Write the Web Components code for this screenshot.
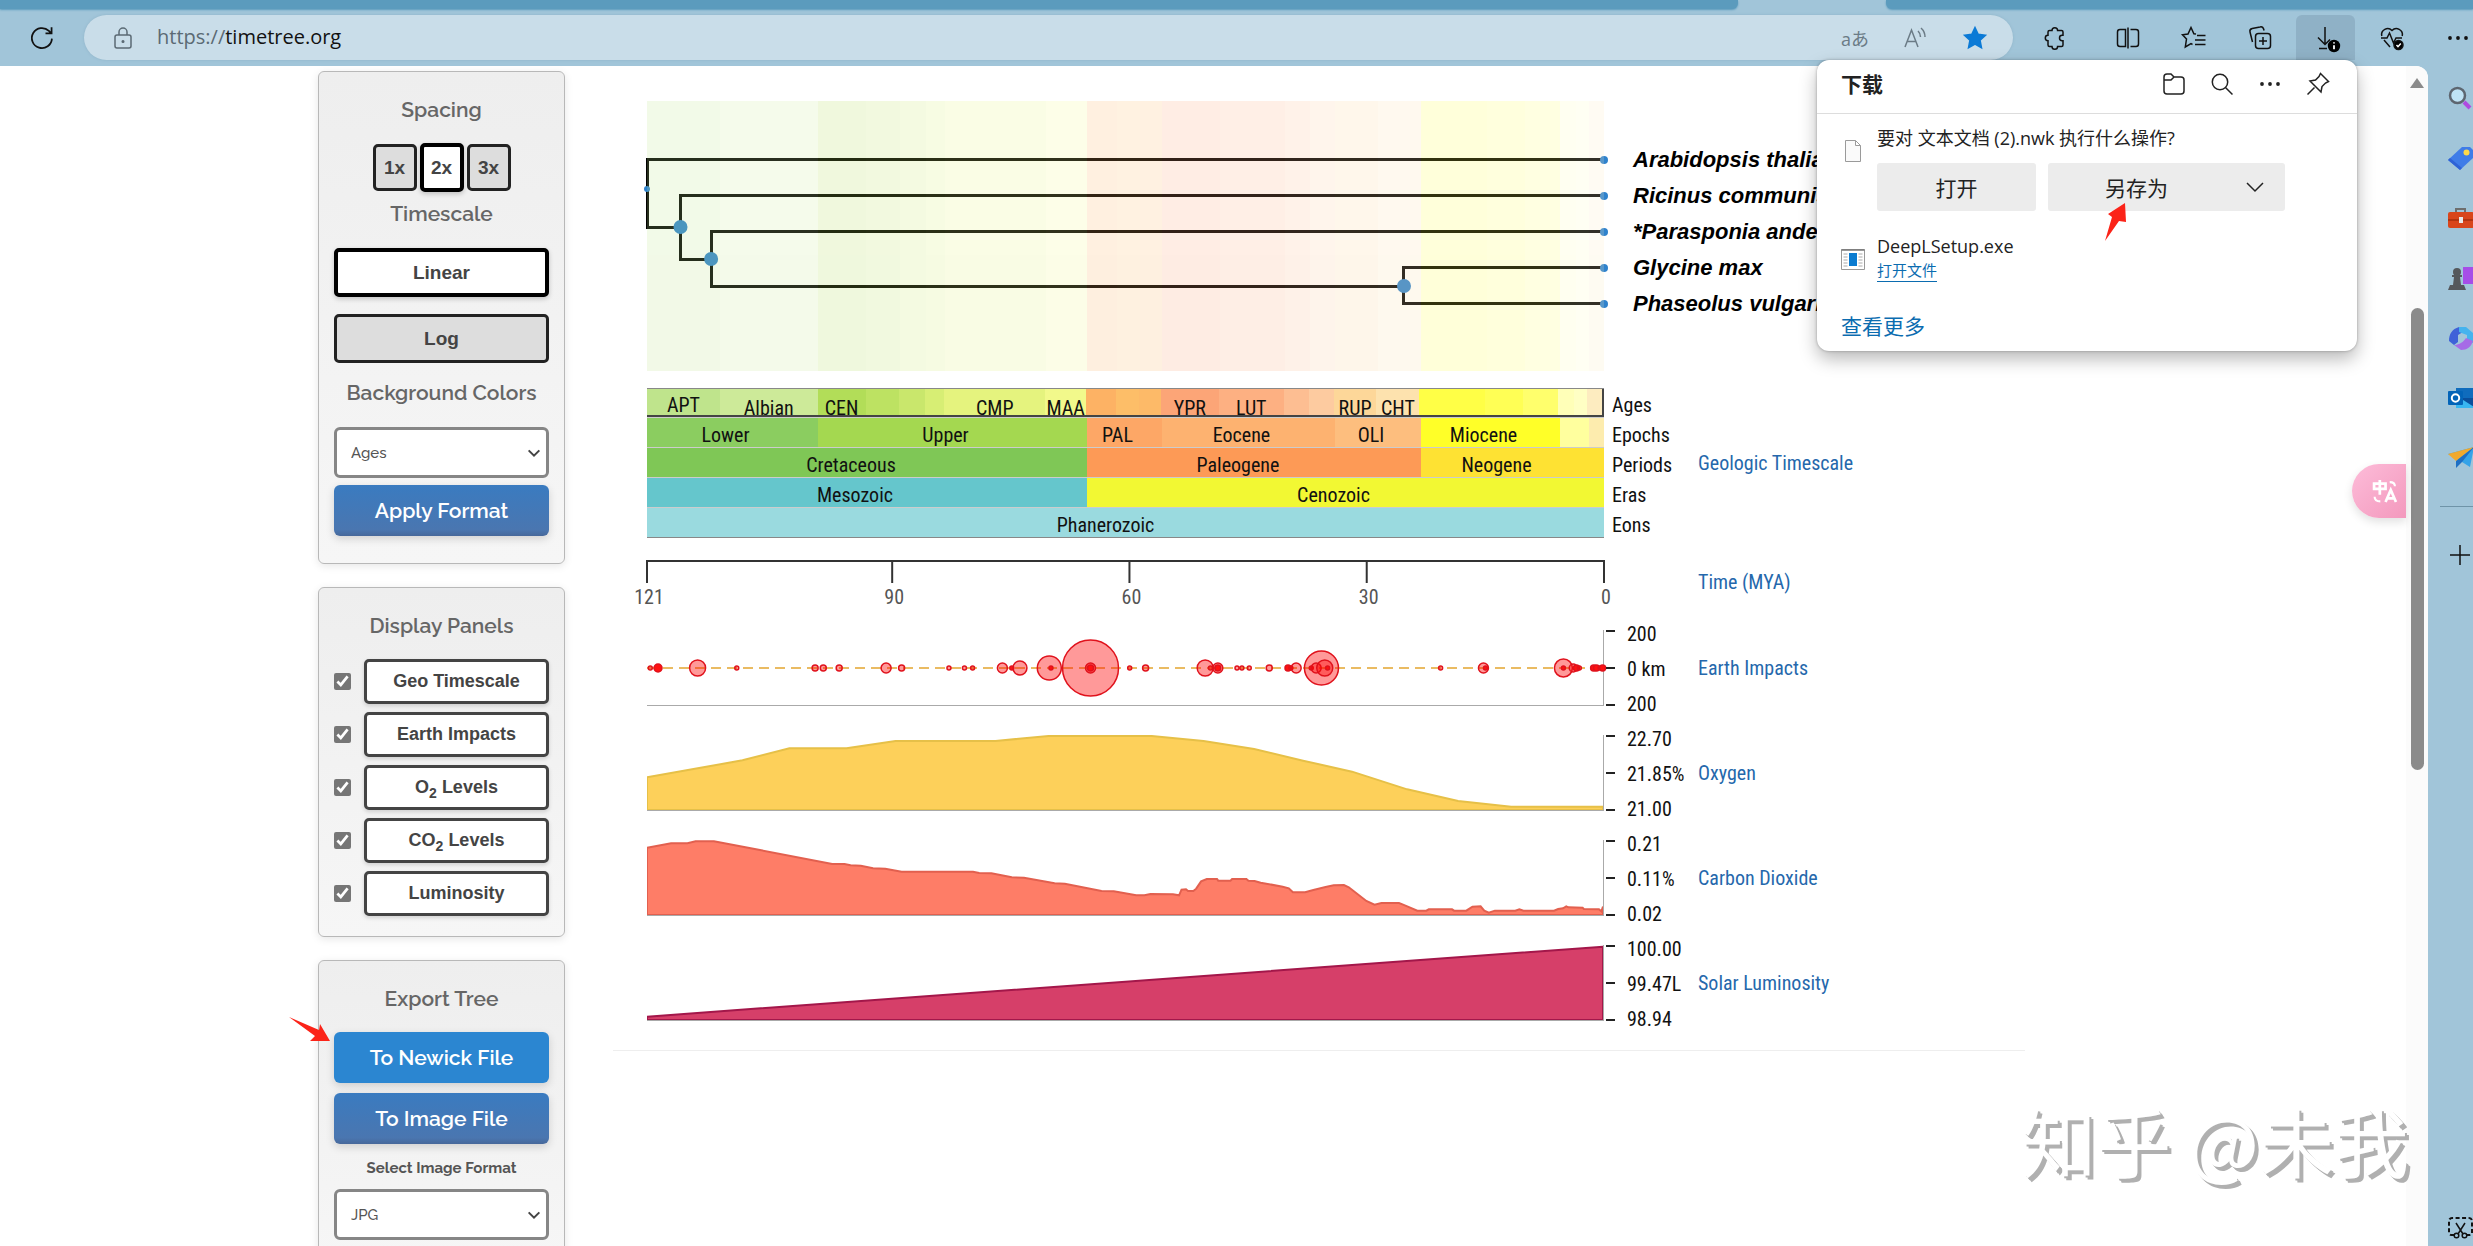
<!DOCTYPE html>
<html lang="zh-CN">
<head>
<meta charset="utf-8">
<title>TimeTree</title>
<style>
html,body{
	height: 100%;
}
body{
	margin: 0;
	overflow: hidden;
	font-family: "Open Sans","Noto Sans CJK SC",sans-serif;
}
</style>
</head>
<body>
<app-window></app-window>
<script>
const define=(name,html,setup)=>{
	customElements.define(name,class extends HTMLElement{
		constructor(){
			super();
			this.attachShadow({mode:'open'});
		}
		connectedCallback(){
			this.shadowRoot.innerHTML=typeof html=='function'?html(this):html;
			if(setup)setup(this);
		}
	});
};

const icons={
reload:'<path d="M20.5 12.5a8.6 8.6 0 1 1-2.6-6.6L20 8M20.2 2.8V8H15"/>',
lock:'<rect x="4" y="9" width="16" height="13" rx="2"/><path d="M8 9V6a4 4 0 0 1 8 0v3"/><circle cx="12" cy="15.500" r=".8" fill="currentColor"/>',
read:'<path d="M2 21 8.500 4 15 21M4.500 15.500h8M15 5a8 8 0 0 1 2.500 6M18 2a12 12 0 0 1 4 9"/>',
star:'<path fill="currentColor" d="m12 1.500 3.200 6.800 7.300.9-5.400 5.100 1.400 7.400L12 18.100l-6.500 3.600 1.400-7.400L1.500 9.200l7.300-.9z"/>',
puzzle:'<path d="M9 4.500a2.800 2.800 0 0 1 5.600 0h3.900c.8 0 1.500.7 1.500 1.500v3.300h-.8a2.700 2.700 0 0 0 0 5.400h.8V19c0 .8-.7 1.500-1.500 1.500h-3.900a2.800 2.800 0 0 1-5.600 0H6.500C5.700 20.500 5 19.800 5 19v-4.300a2.700 2.700 0 0 1 0-5.400V6c0-.8.700-1.500 1.500-1.500z"/>',
split:'<path d="M9.500 3.500H4A2.500 2.500 0 0 0 1.500 6v12A2.500 2.500 0 0 0 4 20.500h5.500zM14.500 3.500H20A2.500 2.500 0 0 1 22.500 6v12a2.500 2.500 0 0 1-2.500 2.500h-5.500M12 1.500v21"/>',
favs:'<path d="m14 8-2.100-.3L9 1.500 6 8l-5.500.8 4 4.200L3.300 21 9 17.700l1.500.8M15 9.500h8.500M13 14h10.500M13 18.500h10.500"/>',
collect:'<rect x="7.500" y="7.500" width="15" height="15" rx="3"/><path d="M15 11v8M11 15h8M4.500 16 2 6a3 3 0 0 1 2.200-3.600L12 .9a3 3 0 0 1 3.600 2.200l.5 1.500"/>',
download:'<path d="M11 1v17M4 11.500l7 7 5-5M5 22.500h8"/><circle cx="20" cy="20" r="6.200" fill="#000" stroke="none"/><path stroke="#fff" stroke-width="1.800" d="M20 19.300v4M20 16.200v1.300"/>',
heart:'<path d="M1.800 10A6 6 0 0 1 12 4.500 6 6 0 0 1 22.200 10M4 14l6 7M1 12h6l2.500-5 4 10 2.500-5h6"/><circle cx="18.500" cy="19" r="4.500" fill="#000"/><path stroke="#fff" d="m16.500 19 1.500 1.700 2.800-3.200"/>',
dots:'<g fill="currentColor" stroke="none"><circle cx="4" cy="12" r="1.900"/><circle cx="12" cy="12" r="1.900"/><circle cx="20" cy="12" r="1.900"/></g>',
folder:'<path d="M2 8V5a3 3 0 0 1 3-3h4l3 3h7a3 3 0 0 1 3 3v11a3 3 0 0 1-3 3H5a3 3 0 0 1-3-3zM2 8h7l3-3"/>',
search:'<circle cx="10" cy="10" r="7.700"/><path d="m15.700 15.700 6.800 6.800"/>',
pin:'<path d="m14.500 1.500 8 8-3 1.500-3.500 3.500-1 5.500-11-11 5.500-1L13 4.500zM8.500 15.500l-7 7"/>',
chev:'<path d="m4 8 8 8 8-8"/>',
page:'<path fill="#fafafa" stroke="#9a9a9a" stroke-width="1" d="M4.500 1.500h10l5 5v16h-15zM14.500 1.500v5h5"/>',
exe:'<path fill="#fff" stroke="#999" stroke-width="1" d="M.5 2.500h23v20H.5z"/><path stroke="#777" stroke-width="1.500" d="M.5 3h23"/><path stroke="#aaa" stroke-width="1" d="M2.500 7h4M2.500 10h4M2.500 13h4M2.500 16h4M2.500 19h4M17.500 7h4M17.500 10h4M17.500 13h4M17.500 16h4M17.500 19h4"/><path fill="#0a7bd0" stroke="none" d="M8 6h8v13H8z"/>',
lens:'<circle cx="9.500" cy="9.500" r="7.500" fill="#bfe3f5" stroke="#5d6670" stroke-width="2.500"/><path stroke="#b04be0" stroke-width="4" d="m16 16 6 6"/>',
tag:'<path fill="#3f7ce8" stroke="none" d="M14 1h8l3 3v8L12 24 0 14z"/><path fill="#2f63d6" stroke="none" d="m0 14 12 10 2-2L2 12z"/><circle cx="18.500" cy="6.500" r="3" fill="#ffd94a" stroke="none"/>',
case:'<path stroke="#6e6e6e" stroke-width="2" d="M8 7V3h9v4"/><rect x="0" y="6" width="26" height="16" rx="2" fill="#d8461b" stroke="none"/><path fill="#b23410" stroke="none" d="M0 13h26v2H0z"/><path fill="#e8e8e8" stroke="none" d="M11 11h4v6h-4z"/>',
chess:'<path fill="#a64de8" stroke="none" d="M15 1h11v17H15z"/><g fill="#55585c" stroke="none"><circle cx="9" cy="6" r="4"/><path d="M4 9h10v2h-2l1 8h3l2 5H0l2-5h3l1-8H4z"/></g>',
m365:'<path fill="#3f62d8" stroke="none" d="M11 1C4 3 1 8 1 15l5 4 4-3V9l8-5z"/><path fill="#45b3ee" stroke="none" d="m11 1 7 0 7 6v10l-6-3V9l-8-3z"/><path fill="#a66be6" stroke="none" d="M6 19c3 0 8-1 12-7l7 3c-2 6-6 9-12 9z"/>',
outlook:'<path fill="#0f6cbd" stroke="none" d="M8 2h18v20H8z"/><path fill="#38b6f1" stroke="none" d="M8 12h18v10H8z"/><path fill="#0a4f9c" stroke="none" d="m12 12 14 9V12z"/><rect y="5" width="15" height="14" rx="1" fill="#0364b8" stroke="none"/><circle cx="7.500" cy="12" r="3.700" stroke="#fff" stroke-width="2"/>',
plane:'<path fill="#35a3e8" stroke="none" d="m0 8 26-7-4 20-8-5z"/><path fill="#f0a92e" stroke="none" d="m0 8 26-7L8 15z"/><path fill="#1d6fc4" stroke="none" d="m8 22 0-7L26 1 14 16z"/>',
plus:'<path d="M12 2v20M2 12h20"/>',
snip:'<path stroke-width="2" stroke-dasharray="4 2.500" d="M6 20H3a2 2 0 0 1-2-2V6a3 3 0 0 1 3-3h17a3 3 0 0 1 3 3v12a2 2 0 0 1-2 2h-3"/><path d="m8 8 7 11M17 8l-7 11"/><circle cx="8.500" cy="20.500" r="2.300"/><circle cx="16.500" cy="20.500" r="2.300"/>',
swap:'<g stroke="#fff" stroke-width="2.600"><path d="M2 4.500h11v5H2zM7.500 1v14"/><path d="m13 22 5-11.500L23 22M14.500 18.500h7"/><path stroke-width="2" d="M17 3c3 0 5 1 5 4M2.500 17c0 3 2 4.500 5.500 4.500"/></g>',
};
define('ui-icon',el=>`
<style>
:host{
	display: inline-block;
	flex: none;
	width: var(--size,24px);
	height: var(--size,24px);
	line-height: 0;
}
svg{
	width: 100%;
	height: 100%;
	overflow: visible;
	fill: none;
	stroke: currentColor;
	stroke-width: var(--stroke,1.5);
}
</style>
<svg viewBox="0 0 24 24" aria-hidden="true">${icons[el.getAttribute('name')]}</svg>
`);

define('browser-bar',`
<style>
:host{
	display: block;
	flex: none;
	background: #a1c5d9;
	overflow: hidden;
}
.tabs{
	display: flex;
	height: 9px;
}
.tabs i{
	background: #5b9bbd;
	box-shadow: 0 1px 2px #5b9bbd;
}
.tabs i:first-child{
	flex: 1738;
	border-bottom-right-radius: 6px;
}
.tabs i:last-child{
	flex: 587;
	border-bottom-left-radius: 6px;
}
.tabs span{
	flex: 148;
}
.row{
	display: flex;
	align-items: center;
	height: 57px;
	padding-left: 19px;
}
button{
	flex: none;
	display: flex;
	align-items: center;
	justify-content: center;
	width: 59px;
	height: 45px;
	padding: 0;
	border: 0;
	border-radius: 6px;
	background: none;
	color: #111;
	font: 18px "Open Sans","Noto Sans CJK SC",sans-serif;
}
.reload{
	width: 46px;
	margin-right: 19px;
}
.field{
	flex: 1;
	display: flex;
	align-items: center;
	height: 45px;
	padding: 0 8px 0 27px;
	border-radius: 23px;
	background: #c9dde9;
	color: #5b6a74;
	box-shadow: 0 0 3px #8fb3c8;
}
.field button{
	width: 60px;
	color: #6b7b86;
}
.url{
	flex: 1;
	margin-left: 22px;
	font-size: 20px;
	line-height: 28px;
	padding-bottom: 2px;
}
.url b{
	font-weight: normal;
	color: #111;
}
.field button.fav{
	color: #0b7ad6;
}
.tools{
	flex: 0 0 448px;
	min-width: 0;
	display: flex;
	align-items: center;
	gap: 7px;
	margin-left: 12px;
}
.tools hr{
	width: 1px;
	height: 24px;
	margin: 0;
	border: 0;
	background: #7e9db0;
}
.on{
	background: #8fb1c6;
	border-radius: 6px 6px 0 0;
}
</style>
<div class="tabs"><i></i><span></span><i></i></div>
<div class="row">
	<button class="reload" aria-label="刷新"><ui-icon name="reload" style="--size:28px"></ui-icon></button>
	<div class="field">
		<ui-icon name="lock"></ui-icon>
		<span class="url">https://<b>timetree.org</b></span>
		<button>aあ</button>
		<button aria-label="朗读"><ui-icon name="read"></ui-icon></button>
		<button class="fav" aria-label="收藏"><ui-icon name="star"></ui-icon></button>
	</div>
	<div class="tools">
		<button aria-label="扩展"><ui-icon name="puzzle"></ui-icon></button>
		<hr>
		<button aria-label="分屏"><ui-icon name="split"></ui-icon></button>
		<button aria-label="收藏夹"><ui-icon name="favs"></ui-icon></button>
		<button aria-label="集锦"><ui-icon name="collect"></ui-icon></button>
		<button class="on" aria-label="下载"><ui-icon name="download"></ui-icon></button>
		<button aria-label="性能"><ui-icon name="heart"></ui-icon></button>
		<button aria-label="更多"><ui-icon name="dots"></ui-icon></button>
	</div>
</div>
`);

define('side-bar',`
<style>
:host{
	flex: none;
	box-sizing: border-box;
	width: 45px;
	display: flex;
	flex-direction: column;
	padding: 20px 0 7px 20px;
	overflow: hidden;
	background: #a1c5d9;
	--size: 24px;
}
button{
	display: block;
	width: 24px;
	height: 24px;
	margin: 0 0 36px;
	padding: 0;
	border: 0;
	background: none;
	color: #111;
}
hr{
	width: 100%;
	margin: 0 0 36px -8px;
	padding-right: 8px;
	border: 0;
	border-top: 1px solid #6f94a8;
}
.end{
	margin: auto 0 0;
}
</style>
<button aria-label="搜索"><ui-icon name="lens"></ui-icon></button>
<button aria-label="购物"><ui-icon name="tag"></ui-icon></button>
<button aria-label="工具"><ui-icon name="case"></ui-icon></button>
<button aria-label="游戏"><ui-icon name="chess"></ui-icon></button>
<button aria-label="Microsoft 365"><ui-icon name="m365"></ui-icon></button>
<button aria-label="Outlook"><ui-icon name="outlook"></ui-icon></button>
<button aria-label="Drop"><ui-icon name="plane"></ui-icon></button>
<hr>
<button aria-label="自定义"><ui-icon name="plus"></ui-icon></button>
<button class="end" aria-label="截图"><ui-icon name="snip"></ui-icon></button>
`);

define('download-popup',`
<style>
:host{
	display: block;
	width: 540px;
	border-radius: 12px;
	background: #fff;
	box-shadow: 0 8px 18px rgba(0,0,0,.28),0 0 3px rgba(0,0,0,.3);
	color: #222;
}
header{
	display: flex;
	align-items: center;
	gap: 24px;
	height: 54px;
	padding: 0 27px 5px 24px;
	box-sizing: border-box;
	border-bottom: 1px solid #ddd;
}
h2{
	flex: 1;
	margin: 0;
	font-size: 21px;
	line-height: 30px;
}
button{
	border: 0;
	border-radius: 3px;
	padding: 0;
	background: none;
	color: #222;
	font: 21px "Open Sans","Noto Sans CJK SC",sans-serif;
}
header button{
	width: 24px;
	height: 24px;
}
.item{
	display: grid;
	grid-template-columns: 24px 1fr;
	column-gap: 12px;
	padding: 0 72px 0 24px;
}
p{
	margin: 0;
	font-size: 18px;
	line-height: 26px;
}
.first{
	padding-top: 11px;
}
.item>ui-icon{
	margin-top: 14px;
}
.actions{
	display: grid;
	grid-template-columns: 159px 1fr;
	gap: 12px;
	margin: 12px 0 22px;
}
.actions button{
	height: 48px;
	background: #ececec;
}
.actions .save{
	display: grid;
	grid-template-columns: 177px 1fr;
	align-items: center;
	justify-items: center;
}
a{
	color: #0b6cb0;
	text-decoration: none;
}
.open{
	display: inline-block;
	border-bottom: 1px solid;
	font-size: 15px;
	line-height: 22px;
}
.more{
	display: block;
	padding: 29px 24px 10px;
	font-size: 21px;
	line-height: 30px;
}
</style>
<header>
	<h2>下载</h2>
	<button aria-label="打开文件夹"><ui-icon name="folder"></ui-icon></button>
	<button aria-label="搜索"><ui-icon name="search"></ui-icon></button>
	<button aria-label="更多"><ui-icon name="dots"></ui-icon></button>
	<button aria-label="固定"><ui-icon name="pin"></ui-icon></button>
</header>
<div class="item first">
	<ui-icon name="page"></ui-icon>
	<div>
		<p>要对 文本文档 (2).nwk 执行什么操作?</p>
		<div class="actions">
			<button>打开</button>
			<button class="save"><span>另存为</span><ui-icon name="chev"></ui-icon></button>
		</div>
	</div>
</div>
<div class="item">
	<ui-icon name="exe"></ui-icon>
	<div>
		<p>DeepLSetup.exe</p>
		<a class="open" href="#">打开文件</a>
	</div>
</div>
<a class="more" href="#">查看更多</a>
`);

define('tool-card',el=>`
<style>
:host{
	display: flex;
	flex-direction: column;
	padding: 23px 15px 20px;
	border: 1px solid #b8b8b8;
	border-radius: 6px;
	background: linear-gradient(#eee,#f6f6f6);
	box-shadow: 0 2px 8px rgba(0,0,0,.1);
}
h3{
	margin: 0 0 18px;
	font: 600 21px/30px Raleway,Lato,sans-serif;
	color: #666;
	text-align: center;
}
</style>
<h3>${el.getAttribute('heading')}</h3>
<slot></slot>
`);

define('tool-select',el=>`
<style>
:host{
	display: grid;
}
select,ui-icon{
	grid-area: 1/1;
}
select{
	appearance: none;
	height: 51px;
	padding: 0 14px;
	border: 3px solid #868686;
	border-radius: 6px;
	background: #fff;
	color: #555;
	font: 500 15px Raleway,Lato,sans-serif;
}
ui-icon{
	--size: 16px;
	--stroke: 3;
	place-self: center end;
	margin-right: 7px;
	color: #444;
	pointer-events: none;
}
</style>
<select aria-label="${el.getAttribute('label')}"><option>${el.getAttribute('value')}</option></select>
<ui-icon name="chev"></ui-icon>
`);

define('panel-toggle',el=>`
<style>
:host{
	display: flex;
	align-items: center;
	gap: 13px;
}
input{
	flex: none;
	width: 17px;
	height: 17px;
	margin: 0;
	accent-color: #767676;
}
label{
	flex: 1;
	box-sizing: border-box;
	height: 45px;
	border: 3px solid #444;
	border-radius: 5px;
	background: #fff;
	box-shadow: 0 2px 4px rgba(0,0,0,.15);
	color: #444;
	font: bold 18px/38px "Liberation Sans",sans-serif;
	text-align: center;
}
</style>
<input type="checkbox" id="box" checked><label for="box"><slot></slot></label>
`);

define('tool-column',`
<style>
:host{
	display: flex;
	flex-direction: column;
	gap: 23px;
	padding-top: 5px;
}
button{
	box-sizing: border-box;
	height: 49px;
	padding: 0;
	border: 3px solid #222;
	border-radius: 5px;
	background: #ddd;
	color: #444;
	font: bold 19px "Liberation Sans",sans-serif;
}
button.on{
	border: 4px solid #000;
	background: #fff;
	box-shadow: 0 2px 5px rgba(0,0,0,.2);
}
.spacing{
	display: flex;
	justify-content: center;
	align-items: center;
	gap: 3px;
}
.spacing button{
	width: 44px;
	height: 47px;
}
.spacing .on{
	height: 49px;
}
h3{
	margin: 7px 0 19px;
	font: 600 21px/30px Raleway,Lato,sans-serif;
	color: #666;
	text-align: center;
}
.log{
	margin-top: 17px;
}
h3.bg{
	margin-top: 15px;
}
button.blue{
	height: 51px;
	border: 0;
	border-radius: 6px;
	background: linear-gradient(#3a7bc0,#4a76b0 88%,#47689a);
	box-shadow: 0 3px 8px rgba(0,0,0,.15);
	color: #fff;
	font: 600 21px Raleway,Lato,sans-serif;
}
button.hot{
	margin-bottom: 10px;
	background: #2b86d1;
}
.apply{
	margin: 7px 0;
}
.toggles{
	display: flex;
	flex-direction: column;
	gap: 8px;
}
h4{
	margin: 12px 0 9px;
	font: bold 15px/24px Raleway,Lato,sans-serif;
	color: #555;
	text-align: center;
}
sub{
	font-size: 14px;
	line-height: 0;
}
</style>
<tool-card heading="Spacing">
	<div class="spacing"><button>1x</button><button class="on">2x</button><button>3x</button></div>
	<h3>Timescale</h3>
	<button class="on">Linear</button>
	<button class="log">Log</button>
	<h3 class="bg">Background Colors</h3>
	<tool-select label="Background Colors" value="Ages"></tool-select>
	<button class="blue apply">Apply Format</button>
</tool-card>
<tool-card heading="Display Panels">
	<div class="toggles">
		<panel-toggle>Geo Timescale</panel-toggle>
		<panel-toggle>Earth Impacts</panel-toggle>
		<panel-toggle>O<sub>2</sub> Levels</panel-toggle>
		<panel-toggle>CO<sub>2</sub> Levels</panel-toggle>
		<panel-toggle>Luminosity</panel-toggle>
	</div>
</tool-card>
<tool-card heading="Export Tree">
	<button class="blue hot">To Newick File</button>
	<button class="blue">To Image File</button>
	<h4>Select Image Format</h4>
	<tool-select label="Select Image Format" value="JPG"></tool-select>
</tool-card>
`);

// [share of the width, colour, name]
const ages=[
	[73,'#bfe48c','APT'],[98,'#cdea99','Albian'],[48,'#b2dd58','CEN'],[34,'#bde262'],[26,'#c9e76c'],[19,'#d7ee74'],
	[101,'#e5f37e','CMP'],[41,'#f2f98b','MAA'],[30,'#fdb264'],[23,'#fdbe68'],[22,'#fdba68'],[58,'#fca577','YPR'],
	[65,'#fdb082','LUT'],[25,'#fdbe92'],[25,'#fdcba0'],[43,'#fdd799','RUP'],[43,'#fde2ae','CHT'],[66,'#ffff46'],
	[38,'#ffff55'],[35,'#ffff6c'],[16,'#ffffb8'],[13,'#ffffc4'],[15,'#fdecc0'],
];
const strata=[
	ages,
	[[171,'#8bcd60','Lower'],[269,'#a4d850','Upper'],[75,'#fda766','PAL'],[173,'#fdb270','Eocene'],[86,'#fdbe7e','OLI'],[139,'#ffff28','Miocene'],[29,'#ffff9e'],[15,'#fdecae']],
	[[440,'#7fc756','Cretaceous'],[334,'#fd9a56','Paleogene'],[183,'#fee233','Neogene']],
	[[440,'#65c6cc','Mesozoic'],[517,'#f2f833','Cenozoic']],
	[[957,'#9adadf','Phanerozoic']],
];
const bands=row=>row.map(([w,c,t])=>`<span style="flex-grow:${w};background:${c}">${t||''}</span>`).join('');

define('geo-bands',`
<style>
:host{
	display: block;
	border-top: 1px solid #888;
	border-bottom: 1px solid #888;
	color: #111;
}
div{
	display: flex;
	height: 30px;
	box-sizing: border-box;
	border-top: 1px solid rgba(0,0,0,.2);
	line-height: 34px;
}
span{
	flex: 0 0 0;
	min-width: 0;
	text-align: center;
	white-space: nowrap;
}
div:nth-of-type(1){
	height: 28px;
	border-top: 0;
	border-bottom: 2px solid #444;
	border-right: 2px solid #444;
	line-height: 38px;
}
div:nth-of-type(1) span:first-child{
	line-height: 32px;
}
/* names sit left of their band's middle, more so in the wider ranks */
div:nth-of-type(2){
	text-indent: -14px;
}
div:nth-of-type(3){
	text-indent: -32px;
}
div:nth-of-type(4){
	text-indent: -24px;
}
div:nth-of-type(5){
	text-indent: -40px;
}
</style>
${strata.map(r=>`<div>${bands(r)}</div>`).join('')}
`);

define('tree-plot',`
<style>
:host{
	display: grid;
	height: 270px;
}
.back,svg{
	grid-area: 1/1;
}
.back{
	display: flex;
	opacity: .2;
}
.back span{
	flex: 0 0 0;
}
svg{
	width: 100%;
	height: 100%;
	overflow: visible;
	stroke: #000;
	stroke-width: 3;
	stroke-linecap: square;
}
line{
	shape-rendering: crispEdges;
}
circle{
	fill: #2f82cc;
	stroke: none;
}
</style>
<div class="back">${ages.map(([w,c])=>`<span style="flex-grow:${w};background:${c}"></span>`).join('')}</div>
<svg aria-hidden="true"></svg>
`,el=>{
	const h=[[0,100,58],[3.5,100,94],[6.7,100,130],[79.1,100,166],[79.1,100,202],[0,3.5,126],[3.5,6.7,158],[6.7,79.1,185]];
	const v=[[0,58,126],[3.5,94,158],[6.7,130,185],[79.1,166,202]];
	const c=[[0,88,3],[3.5,126,7],[6.7,158,7],[79.1,185,7],[100,59,4],[100,95,4],[100,131,4],[100,167,4],[100,203,4]];
	el.shadowRoot.querySelector('svg').innerHTML=
		h.map(([a,b,y])=>`<line x1="${a}%" x2="${b}%" y1="${y+.5}" y2="${y+.5}"/>`).join('')+
		v.map(([x,a,b])=>`<line x1="${x}%" x2="${x}%" y1="${a+.5}" y2="${b+.5}"/>`).join('')+
		c.map(([x,y,r])=>`<circle cx="${x}%" cy="${y}" r="${r}"/>`).join('');
});

define('time-axis',`
<style>
:host{
	display: block;
	height: 70px;
}
svg{
	width: 100%;
	height: 70px;
	overflow: visible;
	stroke: #333;
	stroke-width: 2;
}
text{
	fill: #555;
	stroke: none;
	text-anchor: middle;
}
</style>
<svg></svg>
`,el=>{
	el.shadowRoot.querySelector('svg').innerHTML='<line x1="0" x2="100%" y1="1" y2="1"/>'+
		[121,90,60,30,0].map(t=>{
			const x=(100-t/1.21)+'%';
			return `<line x1="${x}" x2="${x}" y1="0" y2="23"/><text x="${x}" dx="2" y="44">${t}</text>`;
		}).join('');
});

// [position on the 0-2343 scale, radius, solid]
const impacts=[
	[8,2],[27,4,1],[124,8],[220,2],[412,3],[432,3],[471,3],[586,5],[624,3],[740,2],[778,2],[798,2],[871,5],[894,2,1],
	[914,7],[986,12],[990,2,1],[1087,28],[1087,5],[1087,3,1],[1183,2],[1222,3],[1368,8],[1381,2],[1399,5],[1399,3,1],
	[1446,2],[1458,2],[1476,2],[1525,3],[1571,3,1],[1578,2],[1591,5],[1653,17],[1628,2,1],[1640,5],[1661,8],[1668,2,1],
	[1945,2],[2050,5],[2055,2,1],[2246,9],[2246,2,1],[2270,4],[2278,3,1],[2285,2],[2320,3,1],[2327,3,1],[2336,2,1],[2342,3,1],
];
define('impact-plot',`
<style>
:host{
	display: block;
	height: 75px;
	border-right: 1px solid #aaa;
	border-bottom: 1px solid #aaa;
}
svg{
	display: block;
	width: 100%;
	height: 75px;
	overflow: visible;
}
circle{
	fill: rgba(255,0,0,.4);
	stroke: #e0121c;
	stroke-width: 1.5;
}
.solid{
	fill: #f11;
}
</style>
<svg aria-hidden="true">
<line x1="0" x2="100%" y1="38" y2="38" stroke="#eabb62" stroke-width="2" stroke-dasharray="10 6"/>
${impacts.map(([x,r,s])=>`<circle cx="${x/23.43}%" cy="38" r="${r}"${s?' class="solid"':''}/>`).join('')}
</svg>
`);

const curves={
oxygen:['#fdd05a','#e6c048','0 127 114 102 234 76 349 40 489 40 609 18 854 18 984 3 1237 3 1364 18 1488 42 1608 77 1728 110 1863 163 1988 198 2118 215 2343 215'],
carbon:['#fe7d67','#e2604f','0 23 59 10 99 10 119 4 164 4 264 27 454 72 484 72 499 76 524 77 554 85 584 86 624 95 799 95 814 99 844 100 894 112 924 113 999 130 1024 131 1114 153 1144 154 1199 166 1219 166 1234 162 1289 163 1304 166 1310 149 1321 148 1326 153 1339 153 1346 146 1358 124 1372 117 1397 117 1400 122 1430 122 1434 117 1469 117 1474 122 1489 123 1504 128 1558 140 1573 145 1583 157 1613 157 1633 150 1663 141 1683 136 1708 135 1720 142 1763 183 1783 194 1800 189 1843 189 1853 194 1888 212 1910 212 1916 208 1973 208 1978 212 2008 212 2023 200 2043 199 2052 212 2063 218 2078 212 2128 212 2138 208 2148 212 2223 212 2233 207 2245 205 2253 199 2258 202 2293 203 2296 207 2333 208 2339 214 2343 200'],
solar:['#d63f69','#a3174a','0 215 2343 5'],
};
define('area-plot',el=>{
	const [fill,stroke,pts]=curves[el.getAttribute('curve')];
	return `
<style>
:host{
	display: block;
	height: 75px;
	border-right: 1px solid #aaa;
	border-bottom: 1px solid #aaa;
}
svg{
	display: block;
	width: 100%;
	height: 75px;
}
polygon{
	stroke-width: 2;
	vector-effect: non-scaling-stroke;
}
</style>
<svg viewBox="0 0 2343 225" preserveAspectRatio="none" aria-hidden="true">
<polygon fill="${fill}" stroke="${stroke}" points="${pts} 2343 225 0 225"/>
</svg>`;
});

define('axis-marks',el=>`
<style>
:host{
	display: flex;
	gap: 12px;
	padding-left: 2px;
	color: #111;
}
.ticks{
	width: 9px;
	height: 76px;
}
.ticks,.nums{
	display: flex;
	flex-direction: column;
	justify-content: space-between;
}
i{
	height: 2px;
	background: #222;
}
.nums{
	margin: -6px 0 -8px;
	line-height: 20px;
}
</style>
<div class="ticks"><i></i><i></i><i></i></div>
<div class="nums">${el.getAttribute('values').split(' | ').map(t=>`<span>${t}</span>`).join('')}</div>
`);

define('track-row',`
<style>
:host{
	display: grid;
	grid-template-columns: minmax(0,1fr) 94px 327px;
}
.name{
	align-self: center;
}
</style>
<slot></slot>
<slot name="marks"><span></span></slot>
<div class="name"><slot name="name"></slot></div>
`);

define('chart-panel',`
<style>
:host{
	display: flex;
	flex-direction: column;
	padding: 35px 0 29px 34px;
	border-bottom: 1px solid #eee;
	font: 20px/24px "Roboto Condensed",Roboto,sans-serif;
}
.tree{
	display: grid;
	grid-template-columns: minmax(0,1fr) 421px;
}
ul{
	margin: 0;
	padding: 41px 0 0 29px;
	list-style: none;
	font: italic bold 22px/36px "Liberation Sans",sans-serif;
	color: #000;
}
a{
	color: #2568ac;
	text-decoration: none;
}
.strata{
	margin: 17px 0 22px;
}
.ranks{
	display: flex;
	flex-direction: column;
	padding: 2px 0 0 8px;
	margin-bottom: -2px;
	color: #111;
	line-height: 30px;
}
.tracks{
	display: flex;
	flex-direction: column;
	gap: 29px;
}
.time a{
	display: block;
	padding-bottom: 26px;
}
</style>
<div class="tree">
	<tree-plot></tree-plot>
	<ul>
		<li>Arabidopsis thaliana</li>
		<li>Ricinus communis</li>
		<li>*Parasponia andersonii</li>
		<li>Glycine max</li>
		<li>Phaseolus vulgaris</li>
	</ul>
</div>
<track-row class="strata">
	<geo-bands></geo-bands>
	<div slot="marks" class="ranks"><span>Ages</span><span>Epochs</span><span>Periods</span><span>Eras</span><span>Eons</span></div>
	<a slot="name" href="#">Geologic Timescale</a>
</track-row>
<track-row class="time">
	<time-axis></time-axis>
	<a slot="name" href="#">Time (MYA)</a>
</track-row>
<div class="tracks">
	<track-row>
		<impact-plot></impact-plot>
		<axis-marks slot="marks" values="200 | 0 km | 200"></axis-marks>
		<a slot="name" href="#">Earth Impacts</a>
	</track-row>
	<track-row>
		<area-plot curve="oxygen"></area-plot>
		<axis-marks slot="marks" values="22.70 | 21.85% | 21.00"></axis-marks>
		<a slot="name" href="#">Oxygen</a>
	</track-row>
	<track-row>
		<area-plot curve="carbon"></area-plot>
		<axis-marks slot="marks" values="0.21 | 0.11% | 0.02"></axis-marks>
		<a slot="name" href="#">Carbon Dioxide</a>
	</track-row>
	<track-row>
		<area-plot curve="solar"></area-plot>
		<axis-marks slot="marks" values="100.00 | 99.47L | 98.94"></axis-marks>
		<a slot="name" href="#">Solar Luminosity</a>
	</track-row>
</div>
`);

define('app-window',`
<style>
:host{
	position: relative;
	display: flex;
	flex-direction: column;
	height: 100%;
	background: #a1c5d9;
}
.body{
	flex: 1;
	min-height: 0;
	display: flex;
}
.page{
	flex: 1;
	min-width: 0;
	display: flex;
	overflow: hidden;
	background: #fff;
	border-top-right-radius: 12px;
}
main{
	flex: 1;
	min-width: 0;
	display: grid;
	grid-template-columns: 247px minmax(0,1fr);
	align-items: start;
	gap: 48px;
	padding: 0 381px 0 318px;
}
.scroll{
	flex: none;
	width: 22px;
	display: flex;
	flex-direction: column;
	align-items: center;
	padding-top: 12px;
	box-sizing: border-box;
	background: #fbfbfb;
}
.up{
	border: 7px solid transparent;
	border-top: 0;
	border-bottom: 10px solid #8b8b8b;
}
.thumb{
	width: 13px;
	height: calc(40% - 5px);
	margin-top: 220px;
	border-radius: 7px;
	background: #8b8b8b;
}
download-popup,.translate,.mark,.arrow{
	position: absolute;
}
download-popup{
	top: 60px;
	right: 116px;
}
.translate{
	top: 464px;
	right: 67px;
	display: flex;
	align-items: center;
	justify-content: end;
	width: 54px;
	height: 54px;
	padding: 0 9px 0 0;
	border: 0;
	border-radius: 27px 0 0 27px;
	background: linear-gradient(135deg,#fdbcd9,#f399bd);
	box-shadow: 0 4px 10px rgba(0,0,0,.12);
	--size: 25px;
}
.mark{
	right: 64px;
	bottom: 56px;
	color: #fff;
	font: 75px/100px "Noto Sans CJK SC",sans-serif;
	text-shadow: 2px 2px 0 #b0b0b0,4px 4px 0 #b0b0b0;
	white-space: nowrap;
}
.arrow{
	fill: #fb2318;
}
.a1{
	left: 289px;
	top: 1017px;
}
.a2{
	right: 346px;
	top: 203px;
}
</style>
<browser-bar></browser-bar>
<div class="body">
	<div class="page">
		<main>
			<tool-column></tool-column>
			<chart-panel></chart-panel>
		</main>
		<div class="scroll"><div class="up"></div><div class="thumb"></div></div>
	</div>
	<side-bar></side-bar>
</div>
<button class="translate" aria-label="翻译"><ui-icon name="swap"></ui-icon></button>
<download-popup></download-popup>
<svg class="arrow a1" width="41" height="25" viewBox="0 0 41 25"><path d="M0 0 30 13 31 7 41 24 21 24 26 19z"/></svg>
<svg class="arrow a2" width="22" height="38" viewBox="0 0 22 38"><path d="M0 38 7 14 3 11 20 0 21 19 14 18z"/></svg>
<div class="mark">知乎 @未我</div>
`);
</script>
</body>
</html>
